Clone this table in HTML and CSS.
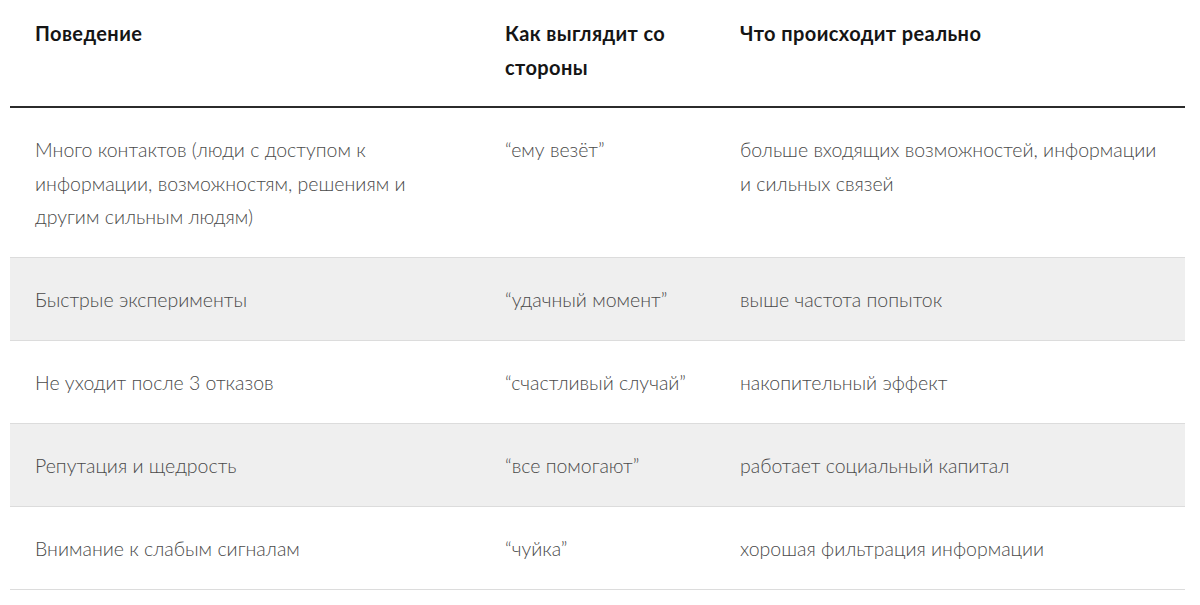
FILE: index.html
```html
<!DOCTYPE html>
<html lang="ru">
<head>
<meta charset="utf-8">
<link rel="stylesheet" href="styles.css">
</head>
<body>
<table class="cmp">
  <colgroup>
    <col class="c1"><col class="c2"><col class="c3">
  </colgroup>
  <thead>
    <tr>
      <th>Поведение</th>
      <th>Как выглядит со стороны</th>
      <th>Что происходит реально</th>
    </tr>
  </thead>
  <tbody>
    <tr>
      <td>Много контактов (люди с доступом к информации, возможностям, решениям и другим сильным людям)</td>
      <td>“ему везёт”</td>
      <td>больше входящих возможностей, информации и сильных связей</td>
    </tr>
    <tr class="alt">
      <td>Быстрые эксперименты</td>
      <td>“удачный момент”</td>
      <td>выше частота попыток</td>
    </tr>
    <tr>
      <td>Не уходит после 3 отказов</td>
      <td>“счастливый случай”</td>
      <td>накопительный эффект</td>
    </tr>
    <tr class="alt">
      <td>Репутация и щедрость</td>
      <td>“все помогают”</td>
      <td>работает социальный капитал</td>
    </tr>
    <tr>
      <td>Внимание к слабым сигналам</td>
      <td>“чуйка”</td>
      <td>хорошая фильтрация информации</td>
    </tr>
  </tbody>
</table>
</body>
</html>
```
FILE: styles.css
```css
html, body {
  margin: 0;
  background: #fff;
}
body {
  padding: 0 15px 0 10px;
  font-family: Lato, "Noto Sans", sans-serif;
}
.cmp {
  width: 1175px;
  border-collapse: collapse;
  table-layout: fixed;
}
.c1 { width: 470px; }
.c2 { width: 235px; }
.c3 { width: 470px; }
.cmp th {
  text-align: left;
  vertical-align: top;
  font-weight: 700;
  font-size: 20px;
  letter-spacing: 0.4px;
  line-height: 34px;
  color: #151515;
  padding: 16px 25px 22px;
  border-bottom: 2px solid #2b2b2b;
}
.cmp td {
  vertical-align: top;
  font-weight: 300;
  font-size: 19.5px;
  line-height: 33.5px;
  color: #4a4a4a;
  padding: 25px 25px 23.5px;
  border-bottom: 1px solid #dcdcdc;
}
.cmp tr.alt td {
  background: #efefef;
}
```
